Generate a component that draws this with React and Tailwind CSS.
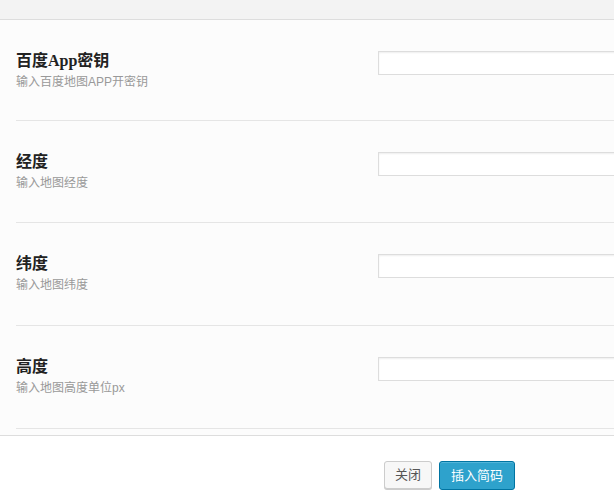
const fields = [
  { title: "百度App密钥", desc: "输入百度地图APP开密钥", h: "h-[101px]" },
  { title: "经度", desc: "输入地图经度", h: "h-[102px]" },
  { title: "纬度", desc: "输入地图纬度", h: "h-[103px]" },
  { title: "高度", desc: "输入地图高度单位px", h: "h-[103px]" },
];

const App = () => {
  return (
    <div className="w-[614px] h-[496px] overflow-hidden bg-white font-['Liberation_Sans','Noto_Sans_CJK_SC',sans-serif]">
      <div className="h-[20px] bg-[#f3f3f3] border-b border-[#dddddd]" />

      <div className="bg-[#fcfcfc] border-b border-[#dddddd] pb-[6px]">
        {fields.map((f) => (
          <div
            key={f.title}
            className={`${f.h} ml-4 border-b border-[#e5e5e5] flex items-start`}
          >
            <div className="w-[362px] shrink-0 pt-[31px]">
              <div className="text-[16px] leading-[20px] font-bold text-[#222] font-['Liberation_Serif','Noto_Sans_CJK_SC',serif]">
                {f.title}
              </div>
              <div className="text-[12px] leading-[16px] mt-[3px] text-[#999]">
                {f.desc}
              </div>
            </div>
            <input
              type="text"
              className="mt-[31px] w-[260px] h-[24px] shrink-0 bg-white border border-[#dddddd] shadow-[inset_0_1px_2px_rgba(0,0,0,0.07)] outline-none"
            />
          </div>
        ))}
      </div>

      <div className="flex gap-[7px] pl-[384px] pt-[25px]">
        <button className="h-[28px] px-[10px] text-[13px] text-[#555] bg-[#f7f7f7] border border-[#cccccc] rounded-[3px] shadow-[0_1px_0_#ccc]">
          关闭
        </button>
        <button className="h-[29px] px-[11px] text-[13px] text-white bg-[#2ea2cc] border border-[#0074a2] rounded-[3px] shadow-[inset_0_1px_0_rgba(120,200,230,0.5)]">
          插入简码
        </button>
      </div>
    </div>
  );
};

export default App;
